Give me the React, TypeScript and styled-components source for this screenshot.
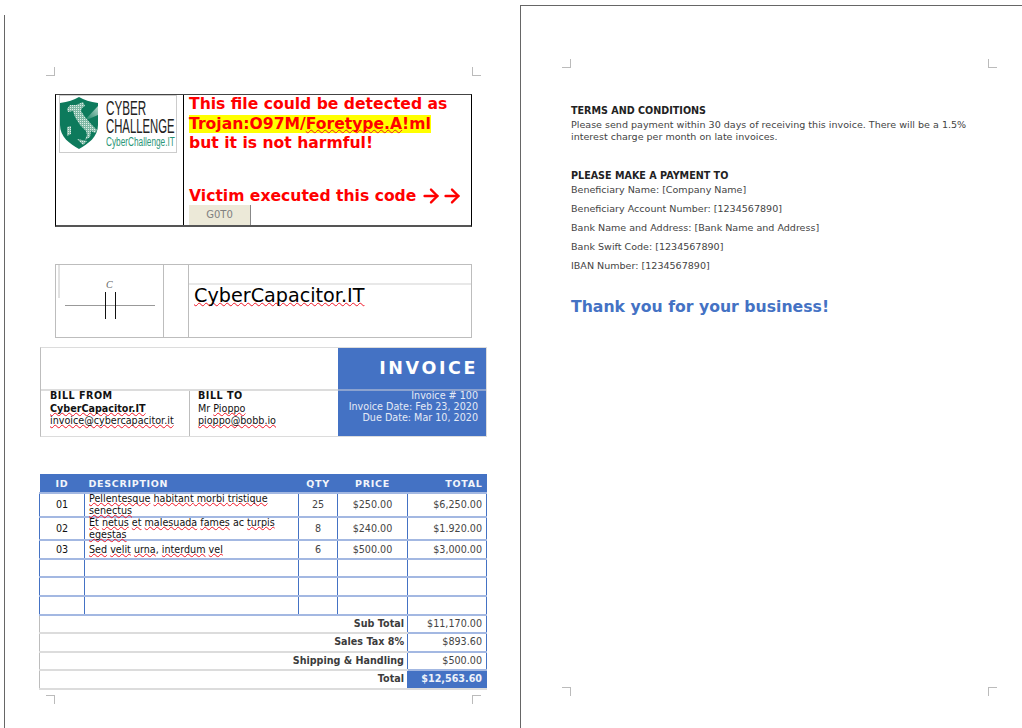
import styled, { createGlobalStyle } from 'styled-components';
import { ArrowRight } from 'lucide-react';

const GlobalStyle = createGlobalStyle`
  html, body {
    margin: 0;
    padding: 0;
    height: 728px;
    overflow: hidden;
    background: #fff;
  }
  body, table {
    font-family: "DejaVu Sans", "Liberation Sans", sans-serif;
  }
`;

const BLUE = '#4472c4';
const LIGHT_BLUE = '#a3b8e2';
const GREY = '#dcdcdc';
const LINE = '#bdbdbd';

const Desk = styled.div`
  display: flex;
  width: 1022px;
  height: 728px;
  overflow: hidden;
`;

const LeftSheet = styled.section`
  box-sizing: border-box;
  flex: none;
  width: 516px;
  height: 713px;
  margin: 15px 0 0 4px;
  padding: 52px 33px 0 35px;
  border-left: 1px solid #666;
`;

const RightSheet = styled.section`
  box-sizing: border-box;
  flex: 1;
  display: flex;
  flex-direction: column;
  height: 723px;
  margin-top: 5px;
  padding: 53px 25px 32px 41px;
  border-left: 1px solid #666;
  border-top: 1px solid #666;
`;

const CropRow = styled.div<{ $inset?: number; $top?: number }>`
  display: flex;
  justify-content: space-between;
  margin: ${(p) => p.$top ?? 0}px ${(p) => p.$inset ?? 0}px 0;
`;

const CropMark = styled.span<{ $v: 'top' | 'bottom'; $h: 'left' | 'right' }>`
  display: block;
  width: 8px;
  height: 8px;
  ${(p) => (p.$v === 'top' ? 'border-bottom' : 'border-top')}: 1px solid #bbb;
  ${(p) => (p.$h === 'left' ? 'border-right' : 'border-left')}: 1px solid #bbb;
`;

const Squiggle = styled.span`
  text-decoration: underline wavy #f01525;
  text-decoration-thickness: 1.2px;
  text-decoration-skip-ink: none;
  text-underline-offset: 0;
`;

/* notice block */
const Notice = styled.div`
  box-sizing: border-box;
  display: grid;
  grid-template-columns: 128px 1fr;
  height: 133px;
  margin: 18px 15px 0;
  border: 1px solid #000;
  border-top-color: #444;
  border-bottom: 2px solid #555;
`;

const LogoCell = styled.div`
  padding: 0 3px;
  border-right: 1px solid #000;
`;

const LogoBox = styled.div`
  box-sizing: border-box;
  display: flex;
  gap: 7px;
  width: 118px;
  height: 58px;
  padding-top: 1px;
  border: 1px solid #ccc;
  overflow: hidden;
`;

const LogoWords = styled.div`
  display: flex;
  flex-direction: column;
  padding-top: 2px;
  font-family: "Liberation Sans", sans-serif;
  white-space: nowrap;
`;

const LogoWord = styled.span<{ $green?: boolean; $squeeze: number }>`
  display: block;
  color: ${(p) => (p.$green ? '#2a9578' : '#222')};
  font-size: ${(p) => (p.$green ? 12.5 : 19.5)}px;
  line-height: ${(p) => (p.$green ? 15 : 18)}px;
  transform: scaleX(${(p) => p.$squeeze});
  transform-origin: 0 50%;
`;

const WarningCell = styled.div`
  padding-left: 5px;
  color: #f00;
  font-size: 15.6px;
  font-weight: 700;
  line-height: 19.5px;
`;

const WarningLine = styled.div<{ $gap?: number }>`
  margin-top: ${(p) => p.$gap ?? 0}px;
  white-space: nowrap;
`;

const Highlight = styled.span`
  background: #ff0;
`;

const BoldArrow = styled(ArrowRight)`
  margin: -6px 0.4px -6px -1.4px;
  vertical-align: middle;
`;

const GotoButton = styled.div`
  width: 61px;
  height: 20px;
  margin-top: -1px;
  background: #ece9d8;
  border-right: 1px solid #888;
  color: #808080;
  font-size: 10px;
  font-weight: 400;
  line-height: 20px;
  text-align: center;
`;

/* brand block */
const Brand = styled.div`
  box-sizing: border-box;
  display: grid;
  grid-template-columns: 108px 25px 1fr;
  height: 74px;
  margin: 37px 15px 0;
  border: 1px solid ${LINE};
`;

const BrandCell = styled.div`
  border-right: 1px solid ${LINE};
  &:last-child {
    border-right: 0;
  }
`;

const BrandSpacer = styled.div`
  height: 18px;
  border-bottom: 2px solid #e8e8e8;
`;

const BrandName = styled.div`
  padding: 0 0 0 5px;
  color: #000;
  font-size: 19.2px;
  line-height: 22px;
`;

const CapacitorArt = styled.svg`
  display: block;
`;

/* invoice head */
const InvoiceHead = styled.div`
  box-sizing: border-box;
  display: grid;
  grid-template-columns: 148px 149px 148px;
  grid-template-rows: 43px 45px;
  width: 447px;
  height: 90px;
  margin-top: 9px;
  border: 1px solid ${GREY};
  border-left-color: ${LINE};
`;

const BlankHead = styled.div`
  grid-column: span 2;
  border-bottom: 2px solid ${GREY};
`;

const InvoiceTitle = styled.div`
  padding-right: 8px;
  background: ${BLUE};
  border-bottom: 2px solid #8ba2cf;
  color: #fff;
  font-size: 17.5px;
  font-weight: 700;
  letter-spacing: 2.6px;
  line-height: 41px;
  text-align: right;
`;

const Party = styled.div`
  padding: 0 0 0 9px;
  color: #111;
  font-size: 9.6px;
  line-height: 12.5px;
  & + & {
    border-left: 1px solid ${LINE};
    padding-left: 8px;
  }
  > div:first-child {
    margin-top: -1px;
  }
`;

const PartyLabel = styled.div`
  font-weight: 700;
  letter-spacing: 0.5px;
`;

const PartyStrong = styled.div`
  font-weight: 700;
`;

const InvoiceMeta = styled.div`
  padding-right: 8px;
  background: ${BLUE};
  color: #e4eaf6;
  font-size: 9.6px;
  line-height: 11px;
  text-align: right;
  > div:first-child {
    margin-top: -1px;
  }
`;

/* line items */
const Items = styled.table`
  width: 447px;
  margin: 37px 0 0 -1px;
  border-collapse: collapse;
  table-layout: fixed;
  font-size: 9.6px;
  color: #333;
`;

const HeadCell = styled.th<{ $align?: string }>`
  height: 18px;
  padding: 0 4px;
  background: ${BLUE};
  color: #f2f5fb;
  font-size: 9.5px;
  font-weight: 700;
  letter-spacing: 0.7px;
  text-align: ${(p) => p.$align ?? 'center'};
`;

const ItemRow = styled.tr<{ $h: number }>`
  height: ${(p) => p.$h}px;
`;

const ItemCell = styled.td<{ $align?: string; $dark?: boolean }>`
  padding: 0 4px;
  border: 1px solid ${BLUE};
  border-top: 2px solid ${LIGHT_BLUE};
  border-bottom: 2px solid ${LIGHT_BLUE};
  color: ${(p) => (p.$dark ? '#111' : '#444')};
  line-height: 12px;
  text-align: ${(p) => p.$align ?? 'center'};
  white-space: nowrap;
`;

const DescriptionText = styled.div`
  margin: -4px 0;
  white-space: normal;
`;

const SummaryLabel = styled.td`
  padding: 0 3px 2px 0;
  border-left: 1px solid ${LINE};
  border-bottom: 2px solid ${GREY};
  color: #3c3c3c;
  font-weight: 700;
  text-align: right;
`;

const SummaryValue = styled.td<{ $total?: boolean }>`
  padding: 0 4px 2px;
  background: ${(p) => (p.$total ? BLUE : '#fff')};
  border: 1px solid ${BLUE};
  border-top: 0;
  border-bottom: 2px solid ${(p) => (p.$total ? GREY : LIGHT_BLUE)};
  color: ${(p) => (p.$total ? '#eef2fa' : '#444')};
  font-weight: ${(p) => (p.$total ? 700 : 400)};
  text-align: right;
`;

/* right page */
const Copy = styled.div`
  margin: 36px 0 0 9px;
  color: #444;
  font-size: 9.55px;
`;

const CopyTitle = styled.h3`
  margin: 0;
  color: #222;
  font-size: 9.6px;
  font-weight: 700;
  line-height: 14px;
`;

const CopyText = styled.p`
  width: 410px;
  margin: 1px 0 0;
  line-height: 12px;
`;

const PaymentList = styled.div`
  margin-top: 26px;
`;

const PaymentLine = styled.div`
  line-height: 19px;
  &:nth-child(2) {
    margin-top: -3.5px;
  }
`;

const Thanks = styled.div`
  margin-top: 22px;
  color: ${BLUE};
  font-size: 15.7px;
  font-weight: 700;
  line-height: 20px;
`;

const BottomCrop = styled(CropRow)`
  margin-top: auto;
`;

function ShieldLogo() {
  return (
    <svg width="39" height="54" viewBox="0 0 39 54" style={{ flex: 'none' }}>
      <defs>
        <pattern id="dots" width="2" height="2" patternUnits="userSpaceOnUse">
          <rect width="2" height="2" fill="#7fb8a5" />
          <rect width="1" height="1" fill="#dcefe7" />
        </pattern>
        <linearGradient id="glow" x1="1" y1="0" x2="0" y2="1">
          <stop offset="0" stopColor="#b5d8cb" />
          <stop offset="1" stopColor="#0d7a5c" />
        </linearGradient>
      </defs>
      <path d="M19 0 C24 3 30 5 38 6 L38 28 C38 40 28 47 19 52 C10 47 0 40 0 28 L0 6 C8 5 14 3 19 0 Z" fill="#0d7a5c" />
      <path d="M38 9 L38 18 L24 24 Z" fill="url(#glow)" />
      <path d="M7 12 L10 8 L16 8 L23 5 L25 9 L22 11 L21 14 L25 20 L31 27 L37 33 L35 36 L31 34 L30 40 L25 43 L27 38 L26 34 L20 28 L15 20 L13 14 L8 15 Z" fill="url(#dots)" />
      <path d="M7 30 L11 29 L11 37 L7 39 Z" fill="url(#dots)" />
      <path d="M17 42 L27 44 L23 48 Z" fill="url(#dots)" />
    </svg>
  );
}

function Capacitor() {
  return (
    <CapacitorArt width="107" height="72" viewBox="0 0 107 72">
      <path d="M3 0 V33" stroke="#c4c4c4" fill="none" />
      <path d="M9 40.5 H99" stroke="#999" fill="none" />
      <path d="M49.5 27 V54 M59.5 27 V54" stroke="#111" fill="none" />
      <text x="50" y="23" fontFamily="Liberation Serif" fontStyle="italic" fontSize="10" fill="#666">C</text>
    </CapacitorArt>
  );
}

const products = [
  { id: '01', desc: ['Pellentesque', ' ', 'habitant', ' morbi ', 'tristique', ' ', 'senectus'], qty: '25', price: '$250.00', total: '$6,250.00', h: 24 },
  { id: '02', desc: ['Et', ' ', 'netus', ' ', 'et', ' ', 'malesuada', ' ', 'fames', ' ac ', 'turpis', ' ', 'egestas'], qty: '8', price: '$240.00', total: '$1.920.00', h: 23 },
  { id: '03', desc: ['Sed', ' ', 'velit', ' ', 'urna', ', ', 'interdum', ' ', 'vel'], qty: '6', price: '$500.00', total: '$3,000.00', h: 19 },
];

const blankRows = [18, 19, 19];

const summary = [
  { label: 'Sub Total', value: '$11,170.00', h: 18 },
  { label: 'Sales Tax 8%', value: '$893.60', h: 19 },
  { label: 'Shipping & Handling', value: '$500.00', h: 18 },
  { label: 'Total', value: '$12,563.60', h: 19, total: true },
];

const payment = [
  'Beneficiary Name: [Company Name]',
  'Beneficiary Account Number: [1234567890]',
  'Bank Name and Address: [Bank Name and Address]',
  'Bank Swift Code: [1234567890]',
  'IBAN Number: [1234567890]',
];

export default function App() {
  return (
    <>
      <GlobalStyle />
      <Desk>
        <LeftSheet>
          <CropRow $inset={6}>
            <CropMark $v="top" $h="left" />
            <CropMark $v="top" $h="right" />
          </CropRow>

          <Notice>
            <LogoCell>
              <LogoBox>
                <ShieldLogo />
                <LogoWords>
                  <LogoWord $squeeze={0.6}>CYBER</LogoWord>
                  <LogoWord $squeeze={0.58}>CHALLENGE</LogoWord>
                  <LogoWord $green $squeeze={0.66}>CyberChallenge.IT</LogoWord>
                </LogoWords>
              </LogoBox>
            </LogoCell>
            <WarningCell>
              <WarningLine>This file could be detected as</WarningLine>
              <WarningLine>
                <Highlight>Trojan:O97M/<Squiggle>Foretype.A</Squiggle>!ml</Highlight>
              </WarningLine>
              <WarningLine>but it is not harmful!</WarningLine>
              <WarningLine $gap={33}>
                Victim executed this code <BoldArrow size={22} strokeWidth={2.6} color="#f00" /><BoldArrow size={22} strokeWidth={2.6} color="#f00" />
              </WarningLine>
              <GotoButton>G0T0</GotoButton>
            </WarningCell>
          </Notice>

          <Brand>
            <BrandCell><Capacitor /></BrandCell>
            <BrandCell />
            <BrandCell>
              <BrandSpacer />
              <BrandName><Squiggle>CyberCapacitor.IT</Squiggle></BrandName>
            </BrandCell>
          </Brand>

          <InvoiceHead>
            <BlankHead />
            <InvoiceTitle>INVOICE</InvoiceTitle>
            <Party>
              <PartyLabel>BILL FROM</PartyLabel>
              <PartyStrong><Squiggle>CyberCapacitor.IT</Squiggle></PartyStrong>
              <div><Squiggle>invoice@cybercapacitor.it</Squiggle></div>
            </Party>
            <Party>
              <PartyLabel>BILL TO</PartyLabel>
              <div>Mr <Squiggle>Pioppo</Squiggle></div>
              <div><Squiggle>pioppo@bobb.io</Squiggle></div>
            </Party>
            <InvoiceMeta>
              <div>Invoice # 100</div>
              <div>Invoice Date: Feb 23, 2020</div>
              <div>Due Date: Mar 10, 2020</div>
            </InvoiceMeta>
          </InvoiceHead>

          <Items>
            <colgroup>
              <col width="45" />
              <col width="214" />
              <col width="39" />
              <col width="70" />
              <col width="79" />
            </colgroup>
            <thead>
              <tr>
                <HeadCell>ID</HeadCell>
                <HeadCell $align="left">DESCRIPTION</HeadCell>
                <HeadCell>QTY</HeadCell>
                <HeadCell>PRICE</HeadCell>
                <HeadCell $align="right">TOTAL</HeadCell>
              </tr>
            </thead>
            <tbody>
              {products.map((item) => (
                <ItemRow key={item.id} $h={item.h}>
                  <ItemCell $dark>{item.id}</ItemCell>
                  <ItemCell $align="left" $dark>
                    <DescriptionText>
                      {item.desc.map((part, i) =>
                        part.trim().length > 2 || part === 'Et' || part === 'et' ? (
                          <Squiggle key={i}>{part}</Squiggle>
                        ) : (
                          part
                        ),
                      )}
                    </DescriptionText>
                  </ItemCell>
                  <ItemCell>{item.qty}</ItemCell>
                  <ItemCell>{item.price}</ItemCell>
                  <ItemCell $align="right">{item.total}</ItemCell>
                </ItemRow>
              ))}
              {blankRows.map((h, row) => (
                <ItemRow key={row} $h={h}>
                  <ItemCell />
                  <ItemCell />
                  <ItemCell />
                  <ItemCell />
                  <ItemCell />
                </ItemRow>
              ))}
              {summary.map((row) => (
                <ItemRow key={row.label} $h={row.h}>
                  <SummaryLabel colSpan={4}>{row.label}</SummaryLabel>
                  <SummaryValue $total={row.total}>{row.value}</SummaryValue>
                </ItemRow>
              ))}
            </tbody>
          </Items>

          <CropRow $inset={6} $top={5}>
            <CropMark $v="bottom" $h="left" />
            <CropMark $v="bottom" $h="right" />
          </CropRow>
        </LeftSheet>

        <RightSheet>
          <CropRow>
            <CropMark $v="top" $h="left" />
            <CropMark $v="top" $h="right" />
          </CropRow>
          <Copy>
            <CopyTitle>TERMS AND CONDITIONS</CopyTitle>
            <CopyText>
              Please send payment within 30 days of receiving this invoice. There will be a 1.5% interest charge per month on late invoices.
            </CopyText>
            <PaymentList>
              <CopyTitle>PLEASE MAKE A PAYMENT TO</CopyTitle>
              {payment.map((line) => (
                <PaymentLine key={line}>{line}</PaymentLine>
              ))}
            </PaymentList>
            <Thanks>Thank you for your business!</Thanks>
          </Copy>
          <BottomCrop>
            <CropMark $v="bottom" $h="left" />
            <CropMark $v="bottom" $h="right" />
          </BottomCrop>
        </RightSheet>
      </Desk>
    </>
  );
}
